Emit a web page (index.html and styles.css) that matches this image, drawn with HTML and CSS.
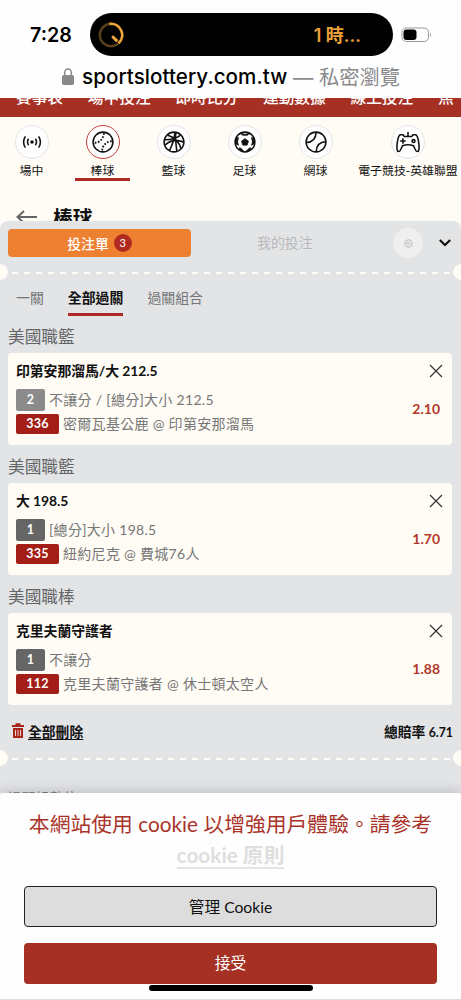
FILE: index.html
```html
<!DOCTYPE html>
<html lang="zh-Hant">
<head>
<meta charset="utf-8">
<title>投注單</title>
<link rel="stylesheet" href="styles.css">
</head>
<body>
<main class="phone">
  <header class="browser">
    <div class="status">
      <span class="time">7:28</span>
      <div class="island">
        <svg class="timer" viewBox="0 0 26 26" fill="none"><circle cx="13" cy="13" r="11.2" stroke="#59401d" stroke-width="2.4"/><path d="M11.5 1.9A11.2 11.2 0 0 1 20.6 21.2" stroke="#f0a63e" stroke-width="2.6"/><path d="M15 15l3.4 3.4" stroke="#f0a63e" stroke-width="3" stroke-linecap="round"/></svg>
        <span class="remain">1 時…</span>
      </div>
      <svg class="battery" viewBox="0 0 32 16"><rect x="1" y="1" width="26.5" height="13.5" rx="4.3" fill="none" stroke="#999" stroke-width="1"/><rect x="2.5" y="2.5" width="13" height="10.5" rx="3" fill="#000"/><path d="M29 5.6q2 2.2 0 4.4z" fill="#999"/></svg>
    </div>
    <div class="address">
      <svg class="lock" viewBox="0 0 12 17"><rect x="0" y="7" width="12" height="10" rx="1.8" fill="#89898c"/><path d="M2.7 8V4.5a3.3 3.6 0 0 1 6.6 0V8" fill="none" stroke="#89898c" stroke-width="1.5"/></svg>
      <span class="domain">sportslottery.com.tw</span><span class="private">— 私密瀏覽</span>
    </div>
  </header>

  <nav class="mainnav"><span>賽事表</span><span>場中投注</span><span>即時比分</span><span>運動數據</span><span>線上投注</span><span>焦</span></nav>

  <nav class="sports">
    <a class="sport"><i class="disc"><svg viewBox="0 0 24 24"><circle cx="12" cy="12" r="1.1" fill="#111"/><path d="M8.300 8.500q-2.400 3.500 0 7M15.700 8.500q2.400 3.500 0 7M4.800 5.800q-4 6.200 0 12.400M19.200 5.800q4 6.200 0 12.400"/></svg></i><span>場中</span></a>
    <a class="sport active"><i class="disc"><svg viewBox="0 0 24 24"><circle cx="12" cy="12" r="10.8"/><path stroke-dasharray="1.8 1.7" stroke-width="2" d="M3 12.800c5 0 9.500-4 10-10.500M21.500 11.200c-6 .3-10 4.500-10.500 10.500"/></svg></i><span>棒球</span></a>
    <a class="sport"><i class="disc"><svg viewBox="0 0 24 24"><circle cx="12" cy="12" r="10.800"/><path d="M5 4.600c7 1.500 13 8 14.500 14.500M2 9.500c7 0 13-1.500 17.200-5M13 1.500c-.5 7-2.500 13-6 20M2.200 15.500c6-5.800 13-6.500 20-3.500M14 2c-1 6.500 .5 13 1 20"/></svg></i><span>籃球</span></a>
    <a class="sport"><i class="disc"><svg viewBox="0 0 24 24"><circle cx="12" cy="12" r="10.800"/><path fill="#111" stroke-width="1" d="M12 8.400l3.700 2.700-1.400 4.300H9.700l-1.400-4.300zM7.300 2.600l4.700 1.300 4.700-1.300L14.500 4.500h-5zM1.800 8.800l3-1.800-1 5 1 3.500-3-1.800zM22.200 8.800l-3-1.800 1 5-1 3.500 3-1.800zM5.400 18.500l2.200.3 3 3.300c-2.200-.2-4-1.700-5.200-3.600zM18.600 18.500l-2.200.3-3 3.300c2.200-.2 4-1.700 5.200-3.600z"/></svg></i><span>足球</span></a>
    <a class="sport"><i class="disc"><svg viewBox="0 0 24 24"><circle cx="12" cy="12" r="10.800"/><path d="M1.500 12.600C8 12.300 11.800 8.500 12.200 1.500M12.300 22.500C12.500 16 16 12 22.600 11.800"/></svg></i><span>網球</span></a>
    <a class="sport wide"><i class="disc"><svg class="pad" viewBox="0 0 28 24"><path d="M14 6V1M8.500 4H5.500C3 5 1.500 15 2 20c.4 3 3 3 4 .5l2-4.500q6-2 12 0l2 4.500c1 2.500 3.600 2.500 4-.5C26.500 15 25 5 22.500 4h-3L18 6h-8zM5.500 11h6M8.500 8v6"/><circle cx="20" cy="11" r="1.600"/></svg></i><span>電子競技-英雄聯盟</span></a>
  </nav>

  <section class="heading">
    <svg viewBox="0 0 22 14" fill="none" stroke="#666" stroke-width="2"><path d="M21 7H2M8 1L1.500 7 8 13"/></svg>
    <h1>棒球</h1>
  </section>

  <section class="slip">
    <div class="sliphead">
      <button class="slipbtn"><span>投注單</span><b>3</b></button>
      <span class="mybets">我的投注</span>
      <span class="gear"><svg viewBox="0 0 10 10" fill="none" stroke="#aaa" stroke-width=".8"><path d="M4 .8h2l.4 1 1.200-.4 1 1.200-.6 1 1 .6v1.600l-1 .6.6 1-1 1.200-1.200-.4-.4 1H4l-.4-1-1.200.4-1-1.200.6-1-1-.6V4.200l1-.6-.6-1 1-1.200 1.200.4z"/><circle cx="5" cy="5" r="1.300"/></svg></span>
      <svg class="chev" viewBox="0 0 12 8" fill="none" stroke="#111" stroke-width="2.200"><path d="M.8 1L6 6l5.200-5"/></svg>
    </div>
    <div class="tear"></div>
    <div class="tabs"><span>一關</span><span class="on">全部過關</span><span>過關組合</span></div>

    <h2>美國職籃</h2>
    <article class="card">
      <div class="pick"><h3>印第安那溜馬/大 212.5</h3>
        <p><b class="tag pale">2</b>不讓分 / [總分]大小 212.5</p>
        <p class="match"><b class="tag red">336</b>密爾瓦基公鹿 @ 印第安那溜馬</p></div>
      <div class="side"><svg viewBox="0 0 12 12"><path d="M0 0l12 12M12 0L0 12"/></svg><strong>2.10</strong></div>
    </article>
    <h2>美國職籃</h2>
    <article class="card">
      <div class="pick"><h3>大 198.5</h3>
        <p><b class="tag">1</b>[總分]大小 198.5</p>
        <p class="match"><b class="tag red">335</b>紐約尼克 @ 費城76人</p></div>
      <div class="side"><svg viewBox="0 0 12 12"><path d="M0 0l12 12M12 0L0 12"/></svg><strong>1.70</strong></div>
    </article>
    <h2>美國職棒</h2>
    <article class="card">
      <div class="pick"><h3>克里夫蘭守護者</h3>
        <p><b class="tag">1</b>不讓分</p>
        <p class="match"><b class="tag red">112</b>克里夫蘭守護者 @ 休士頓太空人</p></div>
      <div class="side"><svg viewBox="0 0 12 12"><path d="M0 0l12 12M12 0L0 12"/></svg><strong>1.88</strong></div>
    </article>

    <div class="total">
      <svg viewBox="0 0 12 15" fill="#a82318"><path d="M0 2h3.500V.2h5V2H12v2H0zM1 5h10v10H1z"/><path d="M3.500 7v6M6 7v6M8.500 7v6" stroke="#e3d4d4" stroke-width="1"/></svg>
      <a>全部刪除</a><span>總賠率 <small>6.71</small></span>
    </div>
    <div class="tear last"></div>
    <p class="under">過關組數位</p>
  </section>

  <section class="cookie">
    <p>本網站使用 cookie 以增強用戶體驗。請參考<br><a>cookie 原則</a></p>
    <button class="manage">管理 Cookie</button>
    <button class="accept">接受</button>
    <div class="home"></div>
  </section>
</main>
</body>
</html>
```

FILE: styles.css
```css
* { box-sizing: border-box; }
body { margin: 0; font-family: Lato, "Noto Sans CJK TC", sans-serif; color: #111; background: #fff; }
h1, h2, h3, p { margin: 0; }
button { font: inherit; border: 0; padding: 0; }
svg { display: block; flex: none; }
.phone { width: 461px; height: 1000px; overflow: hidden; display: flex; flex-direction: column; background: #fffcf5; white-space: nowrap; }
.phone > * { flex: none; }

.browser { height: 98px; background: #fefefe; padding-top: 13px; font-family: Inter, "Noto Sans CJK TC", sans-serif; }
.status { display: flex; align-items: center; height: 43px; padding-left: 30px; }
.time { width: 60px; font-size: 19.700px; font-weight: 600; color: #000; }
.island { width: 303px; height: 43px; border-radius: 22px; background: #000; display: flex; align-items: center; justify-content: space-between; padding: 0 32px 0 8px; color: #eda03a; }
.timer { width: 26px; height: 26px; }
.remain { font-size: 18px; font-weight: 600; margin-top: -2px; }
.battery { width: 32px; height: 16px; margin-left: 8px; }
.address { display: flex; align-items: center; height: 40px; padding-left: 62px; font-size: 20.300px; }
.lock { width: 12px; height: 17px; margin-right: 8px; }
.domain { width: 205px; margin-right: 6px; font-size: 20.600px; font-weight: 500; letter-spacing: .05px; color: #000; }
.private { color: #8a8a8d; }

.mainnav { height: 19px; background: #a63024; color: #fff; display: flex; align-items: flex-start; gap: 24.800px; padding-left: 16px; overflow: hidden; font-size: 15.700px; font-weight: 500; line-height: 20px; }
.mainnav span { flex: none; margin-top: -11px; }

.sports { height: 90px; display: flex; padding: 8px 0 0; }
.sport { flex: none; width: 71px; display: flex; flex-direction: column; align-items: center; position: relative; font-size: 11.900px; line-height: 18px; }
.sport:first-child { width: 63px; margin-right: 4px; }
.sport.wide { width: 114px; }
.disc { width: 34px; height: 34px; border-radius: 50%; border: 1px solid #e4e4e9; background: #fefefe; display: grid; place-items: center; margin-bottom: 3px; }
.disc svg { width: 22px; height: 22px; fill: none; stroke: #111; stroke-width: 1.700; }
.disc .pad { width: 26px; height: 22px; }
.active .disc { border-color: #c5403c; }
.active::after { content: ""; width: 55px; height: 3px; background: #b02824; position: absolute; top: 53px; }

.heading { height: 14px; display: flex; align-items: flex-start; overflow: hidden; padding-left: 16px; gap: 15px; }
.heading svg { width: 22px; height: 14px; margin-top: 3px; }
.heading h1 { font-size: 19.700px; line-height: 24px; font-weight: 700; margin-top: -1px; }

.slip { height: 572px; overflow: hidden; background: #e3e4e6; border-radius: 8px 8px 0 0; padding-top: 8px; }
.sliphead { height: 28px; display: flex; align-items: center; padding-left: 8px; }
.slipbtn { width: 183px; height: 28px; border-radius: 4px; background: #ee8131; color: #fff; font-size: 13.800px; font-weight: 500; display: flex; align-items: center; justify-content: center; gap: 5px; }
.slipbtn span { margin-top: -1px; }
.slipbtn b { width: 18px; height: 18px; border-radius: 50%; background: #b02a20; font-size: 11px; line-height: 18px; font-weight: 400; }
.mybets { width: 56px; margin-left: 66px; font-size: 13.900px; line-height: 18px; margin-top: -1px; color: #b8b9bb; }
.gear { width: 30px; height: 30px; border-radius: 50%; background: #efefef; display: grid; place-items: center; margin-left: 80px; }
.gear svg { width: 9px; height: 9px; }
.chev { width: 12px; height: 8px; margin-left: 16px; }
.tear { height: 16px; margin-top: 7px; background:
  radial-gradient(circle at 0 8px, #fffcf5 7.500px, transparent 8px),
  radial-gradient(circle at 461px 8px, #fffcf5 7.500px, transparent 8px),
  repeating-linear-gradient(90deg, #fffcf5 0 6px, transparent 6px 12px) 12px 8px / 438px 2px no-repeat; }
.tear.last { margin-top: 1px; }
.tabs { display: flex; gap: 24px; padding-left: 16px; height: 36px; font-size: 13.900px; line-height: 36px; color: #757678; }
.tabs .on { color: #111; font-weight: 700; border-bottom: 3px solid #b02824; }
.slip h2 { font-size: 16.700px; line-height: 22px; height: 38px; padding: 11px 0 0 8px; font-weight: 400; color: #636466; }
.tabs + h2 { height: 37px; padding-top: 10px; }
.card { height: 92px; width: 444px; margin-left: 8px; background: #fffcf5; border-radius: 4px; padding: 8px; display: flex; justify-content: space-between; }
.card h3 { font-size: 13.900px; line-height: 20px; font-weight: 700; letter-spacing: -.08px; }
.card p { display: flex; align-items: center; font-size: 14px; line-height: 22px; height: 22px; margin-top: 8px; color: #777; letter-spacing: .3px; }
.card .match { margin-top: 3px; height: 20px; }
.tag { width: 29px; height: 22px; border-radius: 2px; background: #666; color: #fff; text-align: center; font-size: 12.500px; font-weight: 700; margin-right: 4px; }
.tag.pale { background: #8b8b8b; }
.tag.red { width: 43px; height: 20px; line-height: 20px; background: #a31e16; }
.side { display: flex; flex-direction: column; align-items: flex-end; padding: 4px 2px 0 0; }
.side svg { width: 12px; height: 12px; overflow: visible; stroke: #333; stroke-width: 1.200; }
.side strong { margin: 22px 2px 0 0; font-size: 14px; line-height: 20px; color: #b13a2b; }
.total { height: 37px; margin-top: 7px; display: flex; align-items: center; padding: 0 8px 0 12px; font-size: 13.800px; font-weight: 700; }
.total svg { width: 12px; height: 15px; margin-right: 4px; }
.total a { text-decoration: underline; text-underline-offset: 2px; }
.total span { margin-left: auto; }
.total small { font-size: 12.300px; }
.under { padding: 22px 0 0 8px; font-size: 13.800px; line-height: 20px; color: #737477; }

.cookie { height: 207px; background: #fefefe; border-radius: 4px 4px 0 0; box-shadow: 0 -2px 12px rgba(80, 80, 110, .25); padding: 15px 24px 0; border-bottom: 1px solid #ddd; position: relative; }
.cookie p { text-align: center; font-size: 20.800px; line-height: 31px; height: 78px; color: #a93328; margin: 0 -20px; }
.cookie a { color: #dedede; font-weight: 700; border-bottom: 2px solid #e4e4e4; }
.cookie button { display: block; width: 413px; border-radius: 4px; font-size: 15.700px; }
.cookie .manage { height: 41px; background: #ddd; border: 1px solid #222; color: #111; }
.cookie .accept { height: 41px; margin-top: 16px; padding-bottom: 2px; background: #a63024; color: #fff; }
.home { width: 164px; height: 6px; border-radius: 3px; background: #000; margin: 1px 0 0 125px; }
```
